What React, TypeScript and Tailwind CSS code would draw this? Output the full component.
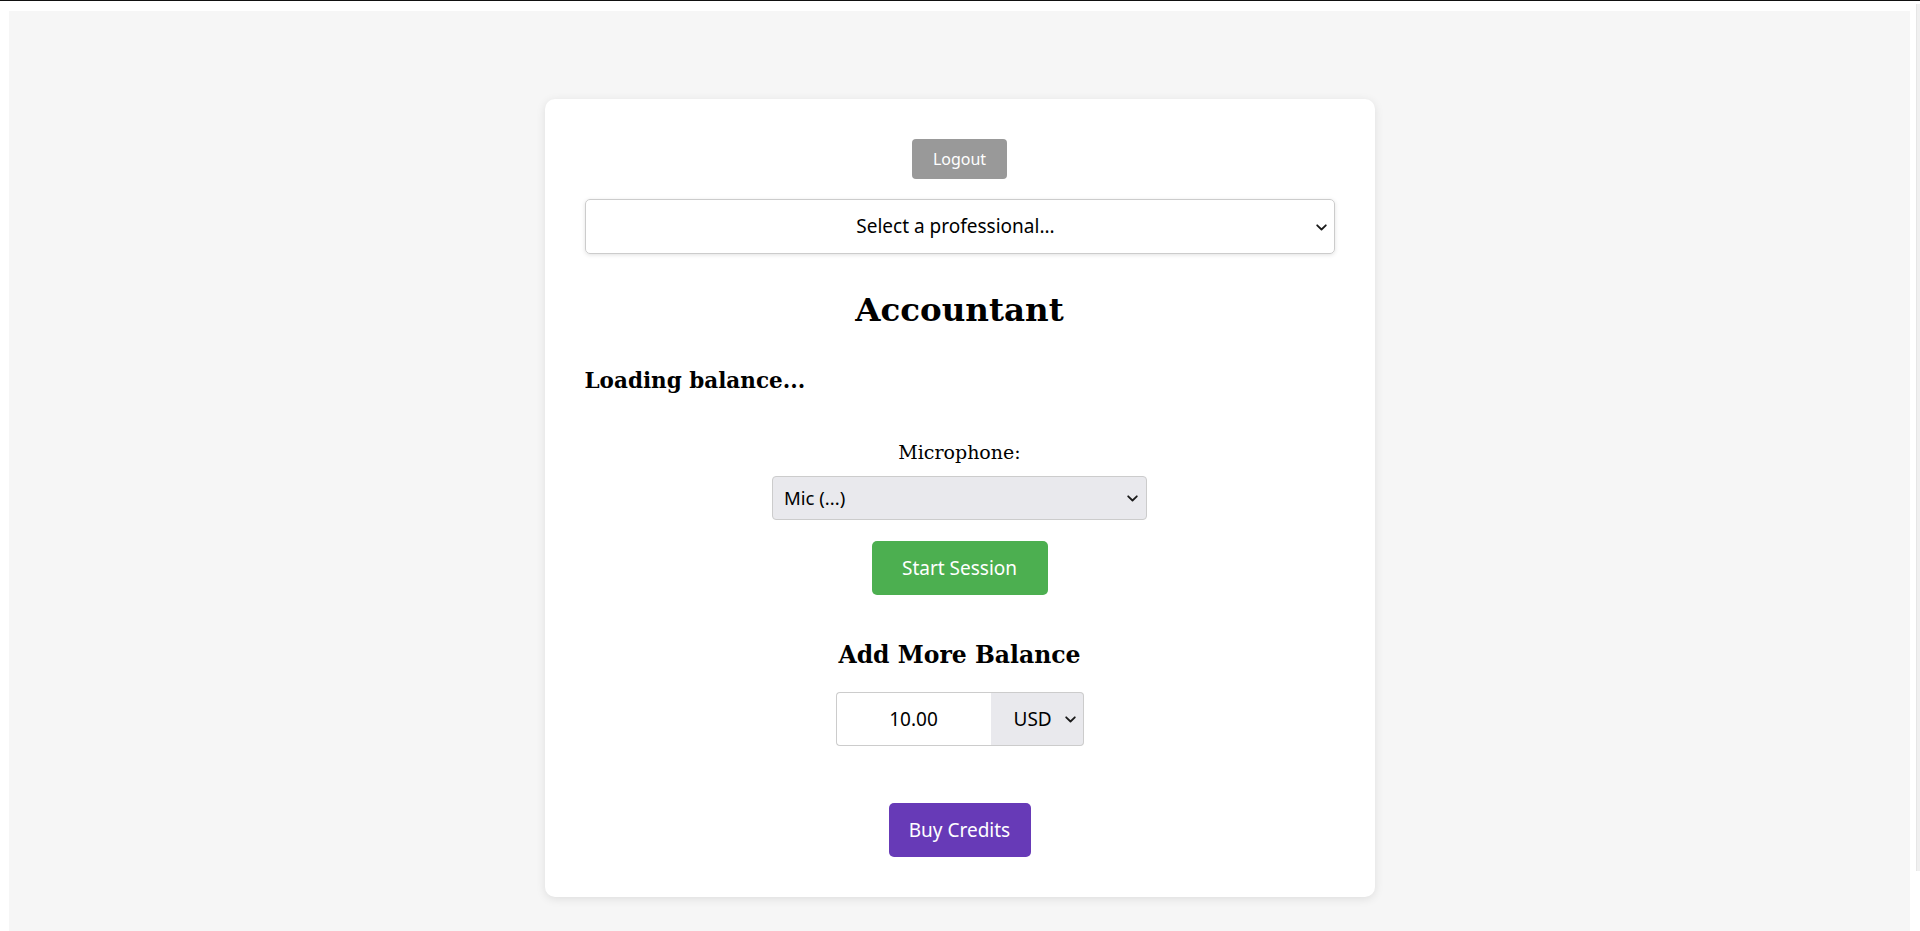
import React from "react";

function Chevron({ className = "" }: { className?: string }) {
  return (
    <svg
      width="11"
      height="7"
      viewBox="0 0 11 7"
      className={className}
      fill="none"
      stroke="#1a1a1a"
      strokeWidth="1.8"
      strokeLinecap="round"
      strokeLinejoin="round"
    >
      <path d="M1.2 1.3l4.3 4.2 4.3-4.2" />
    </svg>
  );
}

export default function App() {
  return (
    <div className="min-h-screen bg-white border-t border-[#111] flex items-start font-['Noto_Sans',sans-serif] text-black">
      {/* page area */}
      <div className="flex-1 pl-[9px] pt-[10px] mr-[6px]">
        <main className="bg-[#f6f6f6] pt-[88px] pb-[40px] min-h-[920px]">
          <div className="mx-auto w-[830px] bg-white rounded-[10px] shadow-[0_2px_10px_rgba(0,0,0,0.1)] p-[40px] flex flex-col items-center">
            <button className="h-[40px] w-[95px] rounded-[4px] bg-[#999999] text-white text-[16px]">
              Logout
            </button>

            <div className="mt-[20px] w-full h-[55px] border border-[#cccccc] rounded-[5px] shadow-[0_1px_4px_rgba(0,0,0,0.12)] relative flex items-center justify-center pl-[4px] pr-[12px] text-[19px]">
              <span>Select a professional...</span>
              <Chevron className="absolute right-[7px] top-[24px]" />
            </div>

            <h1 className="mt-[36px] font-['DejaVu_Serif',serif] font-bold text-[32.5px] leading-[40px]">
              Accountant
            </h1>

            <h3 className="self-start mt-[36px] font-['DejaVu_Serif',serif] font-bold text-[21.5px] leading-[30px]">
              Loading balance...
            </h3>

            <label className="mt-[43px] font-['DejaVu_Serif',serif] text-[19px] leading-[26px]">
              Microphone:
            </label>
            <div className="mt-[11px] w-[375px] h-[44px] bg-[#e9e9ed] border border-[#cccccc] rounded-[4px] flex items-center justify-between pl-[11px] pr-[8px] text-[18.5px]">
              <span>Mic (...)</span>
              <Chevron />
            </div>

            <button className="mt-[21px] w-[176px] h-[54px] bg-[#4caf50] rounded-[5px] text-white text-[19px]">
              Start Session
            </button>

            <h2 className="mt-[44px] font-['DejaVu_Serif',serif] font-bold text-[23.5px] leading-[32px]">
              Add More Balance
            </h2>

            <div className="mt-[21px] flex h-[54px]">
              <div className="w-[155px] border border-r-0 border-[#cccccc] rounded-l-[4px] flex items-center justify-center text-[19px]">
                10.00
              </div>
              <div className="w-[93px] bg-[#e9e9ed] border border-l-0 border-[#cccccc] rounded-r-[4px] flex items-center justify-between pl-[23px] pr-[7px] text-[19px]">
                <span>USD</span>
                <Chevron />
              </div>
            </div>

            <button className="mt-[57px] w-[142px] h-[54px] bg-[#673ab7] rounded-[5px] text-white text-[19px]">
              Buy Credits
            </button>
          </div>
        </main>
      </div>
      {/* thin strip on the right */}
      <div className="w-[4px] mt-[3px] h-[867px] bg-[#f0f0f0] border-l border-[#e6e6e6]" />
    </div>
  );
}
